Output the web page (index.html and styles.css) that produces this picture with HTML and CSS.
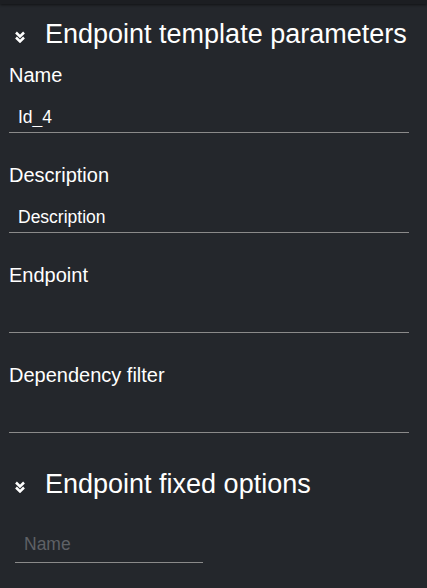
FILE: index.html
```html
<!DOCTYPE html>
<html lang="en">
<head>
<meta charset="utf-8">
<title>Endpoint template parameters</title>
<link rel="stylesheet" href="styles.css">
</head>
<body>
<div class="topbar"></div>
<main class="panel">
  <section class="section">
    <h2 class="section-header">
      <svg class="chev" viewBox="0 0 10 12" width="10" height="12" aria-hidden="true">
        <polyline points="1,1.5 5,5.5 9,1.5" />
        <polyline points="1,6.5 5,10.5 9,6.5" />
      </svg>
      <span>Endpoint template parameters</span>
    </h2>
    <div class="fields">
      <div class="field">
        <label class="label">Name</label>
        <input class="input" type="text" value="Id_4">
      </div>
      <div class="field">
        <label class="label">Description</label>
        <input class="input" type="text" value="Description">
      </div>
      <div class="field">
        <label class="label">Endpoint</label>
        <input class="input" type="text" value="">
      </div>
      <div class="field">
        <label class="label">Dependency filter</label>
        <input class="input" type="text" value="">
      </div>
    </div>
  </section>
  <section class="section section-second">
    <h2 class="section-header">
      <svg class="chev" viewBox="0 0 10 12" width="10" height="12" aria-hidden="true">
        <polyline points="1,1.5 5,5.5 9,1.5" />
        <polyline points="1,6.5 5,10.5 9,6.5" />
      </svg>
      <span>Endpoint fixed options</span>
    </h2>
    <input class="input input-small" type="text" placeholder="Name">
  </section>
</main>
</body>
</html>
```

FILE: styles.css
```css
html, body {
  margin: 0;
  padding: 0;
}
body {
  background: #24272c;
  color: #ffffff;
  font-family: "Liberation Sans", Arial, sans-serif;
  min-height: 100vh;
  overflow: hidden;
}
.topbar {
  height: 4px;
  background: #1c1e22;
  box-shadow: 0 1px 3px rgba(0, 0, 0, 0.55);
}
.panel {
  display: flex;
  flex-direction: column;
}
.section-header {
  display: flex;
  align-items: center;
  gap: 20px;
  margin: 15px 0 0 15px;
  font-size: 27px;
  line-height: 31px;
  font-weight: normal;
  height: 31px;
}
.chev {
  flex: none;
  margin-top: 5px;
  fill: none;
  stroke: #ffffff;
  stroke-width: 2.5;
  stroke-linecap: butt;
  stroke-linejoin: miter;
}
.fields {
  display: flex;
  flex-direction: column;
  gap: 31px;
  margin: 14px 0 0 9px;
  width: 400px;
}
.field {
  display: flex;
  flex-direction: column;
}
.label {
  font-size: 20px;
  line-height: 23px;
  height: 23px;
}
.input {
  display: block;
  box-sizing: content-box;
  width: 382px;
  height: 20px;
  padding: 20px 9px 5px 9px;
  margin: 0;
  border: none;
  border-bottom: 1px solid #8a8a8a;
  background: transparent;
  color: #ffffff;
  font-family: "Liberation Sans", Arial, sans-serif;
  font-size: 17.5px;
  line-height: 20px;
  outline: none;
}
.section-second .section-header {
  margin-top: 36px;
}
.input-small {
  width: 171px;
  padding: 4px 8px 8px 9px;
  margin: 30px 0 0 15px;
}
.input-small::placeholder {
  color: #5f6166;
  opacity: 1;
}
```
